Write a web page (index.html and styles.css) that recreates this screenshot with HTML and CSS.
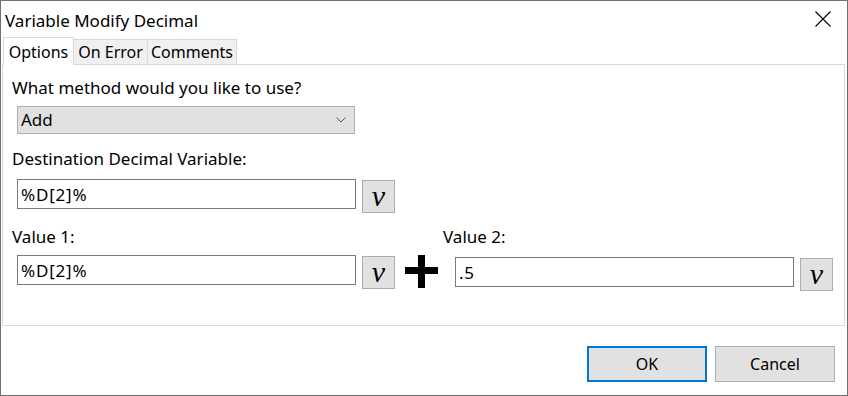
FILE: index.html
```html
<!DOCTYPE html>
<html lang="en">
<head>
    <meta charset="UTF-8">
    <title>Variable Modify Decimal</title>
    <link rel="stylesheet" href="styles.css">
</head>
<body>
    <div class="window">
        <div class="titlebar">
            <span class="title">Variable Modify Decimal</span>
            <svg class="close" width="16" height="16" viewBox="0 0 16 16">
                <path d="M0.5 0.5 L15.5 15.5 M15.5 0.5 L0.5 15.5" stroke="#000" stroke-width="1.1" fill="none"/>
            </svg>
        </div>

        <div class="tabs">
            <div class="tab active">Options</div>
            <div class="tab">On Error</div>
            <div class="tab">Comments</div>
        </div>

        <div class="panel">
            <div class="field-label">What method would you like to use?</div>
            <div class="select">
                <span>Add</span>
                <svg class="chevron" width="10" height="6" viewBox="0 0 10 6">
                    <path d="M0.5 0.5 L5 5 L9.5 0.5" stroke="#555" stroke-width="1" fill="none"/>
                </svg>
            </div>

            <div class="field-label gap-top">Destination Decimal Variable:</div>
            <div class="input-row">
                <input type="text" class="text-input" value="%D[2]%">
                <button class="var-btn">v</button>
            </div>

            <div class="values">
                <div class="value-col">
                    <div class="field-label">Value 1:</div>
                    <div class="input-row">
                        <input type="text" class="text-input" value="%D[2]%">
                        <button class="var-btn">v</button>
                    </div>
                </div>

                <svg class="plus" width="33" height="33" viewBox="0 0 33 33">
                    <rect x="0" y="12" width="33" height="7" fill="#000"/>
                    <rect x="13" y="0" width="7" height="33" fill="#000"/>
                </svg>

                <div class="value-col right">
                    <div class="field-label">Value 2:</div>
                    <div class="input-row">
                        <input type="text" class="text-input" value=".5">
                        <button class="var-btn">v</button>
                    </div>
                </div>
            </div>
        </div>

        <div class="footer">
            <button class="btn default">OK</button>
            <button class="btn">Cancel</button>
        </div>
    </div>
</body>
</html>
```

FILE: styles.css
```css
body {
    margin: 0;
    padding: 0;
    background-color: #ffffff;
    font-family: "Noto Sans", sans-serif;
    font-size: 17px;
    color: #000;
}

.window {
    width: 848px;
    height: 396px;
    box-sizing: border-box;
    border: 1px solid #6f6f6f;
    background-color: #ffffff;
}

.titlebar {
    height: 36px;
    display: flex;
    justify-content: space-between;
    align-items: flex-start;
}

.title {
    padding: 10px 0 0 4px;
    line-height: 20px;
}

.close {
    margin: 10px 16px 0 0;
}

.tabs {
    height: 27px;
    display: flex;
    align-items: flex-end;
    padding-left: 2px;
    font-size: 16px;
}

.tab {
    box-sizing: border-box;
    height: 25px;
    padding-top: 2px;
    line-height: 20px;
    text-align: center;
    background-color: #f0f0f0;
    border: 1px solid #d9d9d9;
    border-bottom: none;
    border-left: none;
}

.tab:nth-child(2) {
    width: 74px;
}

.tab:nth-child(3) {
    width: 89px;
}

.tab.active {
    width: 71px;
    height: 28px;
    padding-top: 4px;
    margin-bottom: -1px;
    background-color: #ffffff;
    border-left: 1px solid #d9d9d9;
    position: relative;
    z-index: 1;
}

.panel {
    box-sizing: border-box;
    height: 262px;
    margin: 0 2px 0 1px;
    border: 1px solid #d9d9d9;
    padding: 13px 0 0 9px;
}

.field-label {
    line-height: 20px;
}

.gap-top {
    margin-top: 15px;
}

.select {
    box-sizing: border-box;
    width: 338px;
    height: 28px;
    margin: 8px 0 0 5px;
    padding: 0 8px 1px 3px;
    display: flex;
    justify-content: space-between;
    align-items: center;
    background-color: #e1e1e1;
    border: 1px solid #adadad;
}

.input-row {
    display: flex;
    align-items: flex-start;
    gap: 6px;
    margin: 10px 0 0 5px;
}

.text-input {
    box-sizing: border-box;
    width: 339px;
    height: 30px;
    margin: 0;
    padding: 0 3px;
    border: 1px solid #7a7a7a;
    font-family: inherit;
    font-size: inherit;
    letter-spacing: 0.8px;
    color: #000;
    outline: none;
}

.var-btn {
    box-sizing: border-box;
    width: 33px;
    height: 33px;
    margin-top: 1px;
    padding: 0 0 4px;
    background-color: #e1e1e1;
    border: 1px solid #adadad;
    font-family: "Liberation Serif", serif;
    font-style: italic;
    font-size: 30px;
    line-height: 1;
    color: #000;
}

.values {
    display: flex;
    align-items: flex-start;
    margin-top: 14px;
}

.values .input-row {
    margin-top: 8px;
}

.plus {
    margin: 28px 0 0 10px;
}

.value-col.right {
    margin-left: 5px;
}

.value-col.right .input-row {
    margin: 10px 0 0 12px;
}

.footer {
    display: flex;
    justify-content: flex-end;
    gap: 8px;
    padding: 20px 12px 0 0;
}

.btn {
    box-sizing: border-box;
    width: 120px;
    height: 36px;
    background-color: #e1e1e1;
    border: 1px solid #adadad;
    font-family: inherit;
    font-size: 16px;
    color: #000;
}

.btn.default {
    border: 2px solid #0078d7;
}
```
